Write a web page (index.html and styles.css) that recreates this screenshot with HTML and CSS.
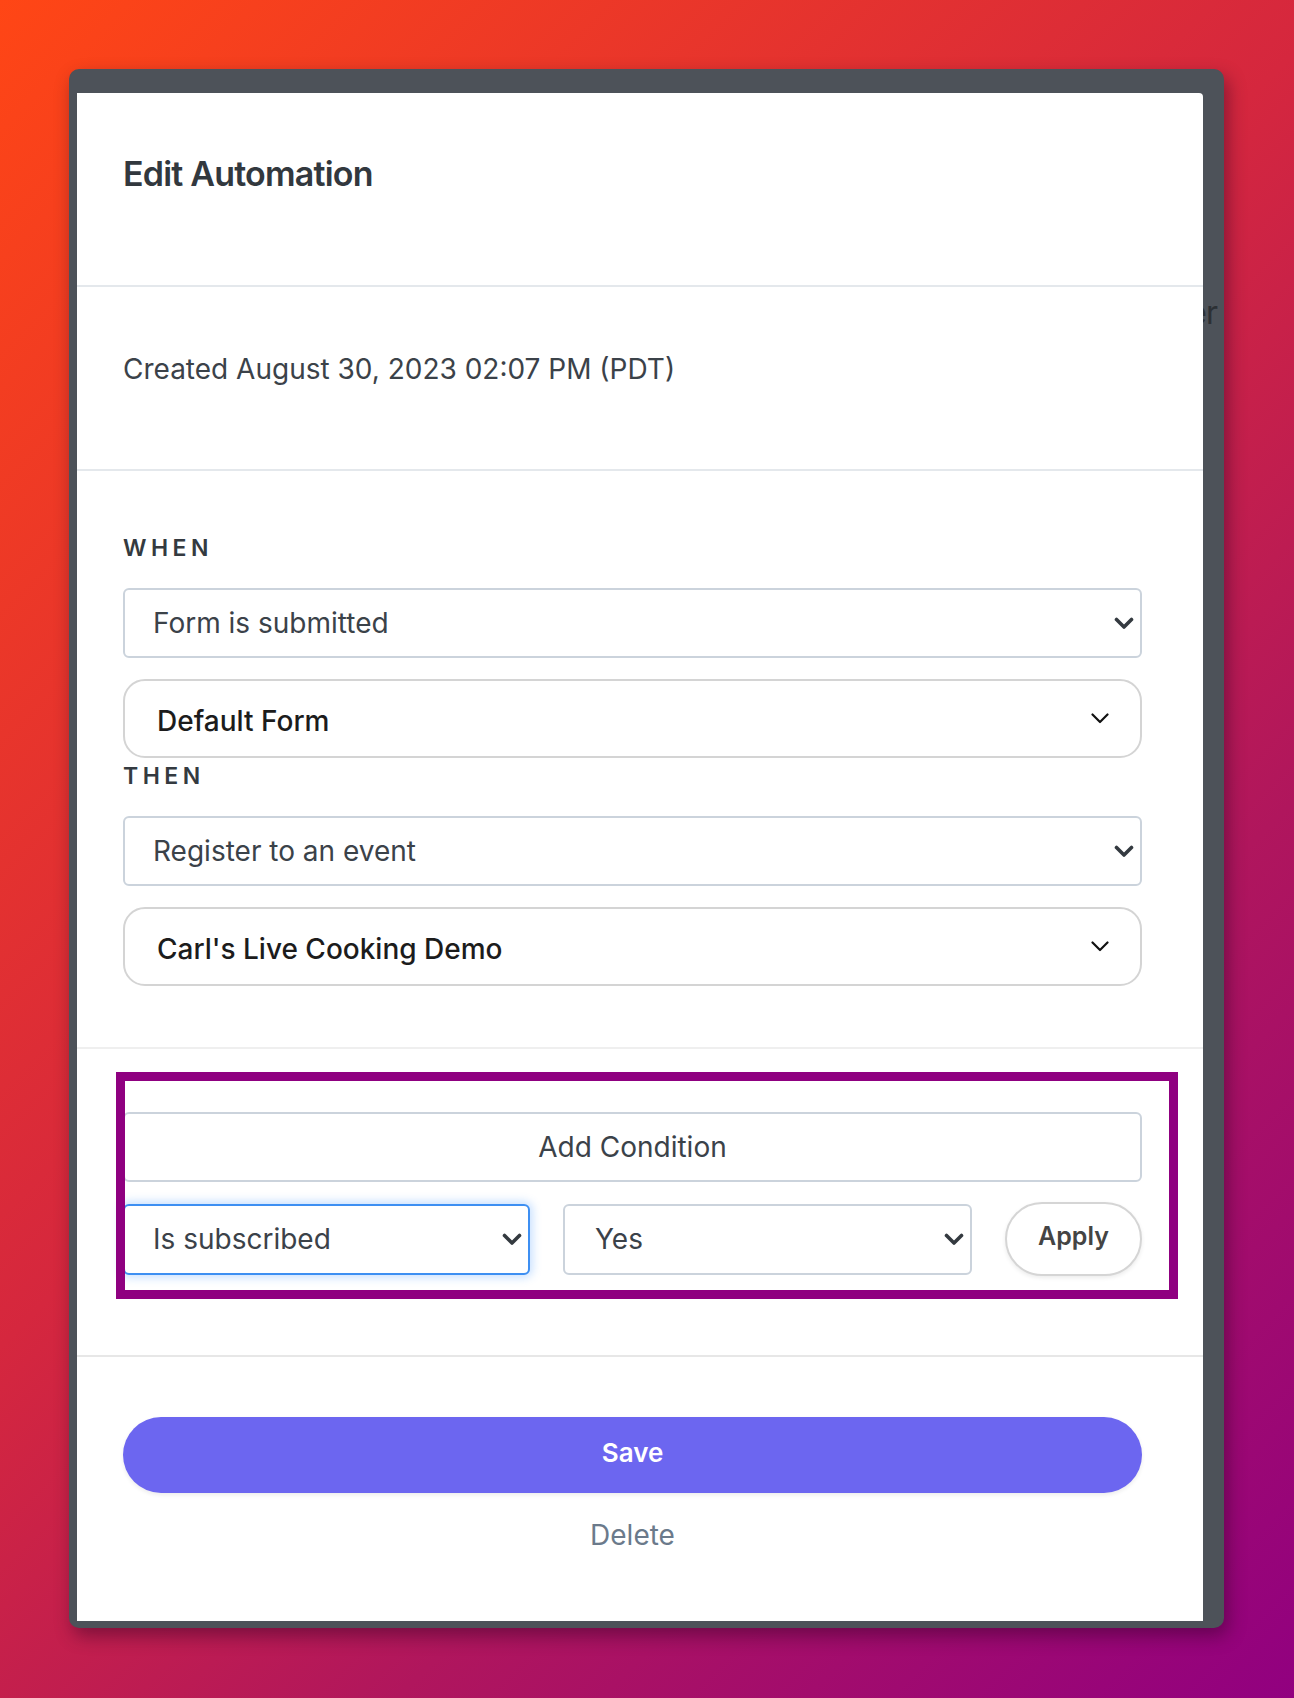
FILE: index.html
```html
<!DOCTYPE html>
<html lang="en">
<head>
<meta charset="utf-8">
<title>Edit Automation</title>
<link rel="stylesheet" href="styles.css">
</head>
<body>
<div class="stage">
  <div class="frame">
    <span class="peek">Register</span>
    <div class="panel">
      <header class="sec sec-head">
        <h1 class="title">Edit Automation</h1>
      </header>
      <section class="sec sec-meta">
        <p class="created">Created August 30, 2023 02:07 PM (PDT)</p>
      </section>
      <section class="sec sec-rules">
        <div class="label">WHEN</div>
        <div class="select sel-flat">
          <span class="sel-text">Form is submitted</span>
          <svg class="chev-bold" width="20" height="14" viewBox="0 0 20 14"><path d="M2.5 3.5 10 11 17.5 3.5" fill="none" stroke="#343a40" stroke-width="3.6" stroke-linecap="round" stroke-linejoin="round"/></svg>
        </div>
        <div class="select sel-round">
          <span class="sel-text">Default Form</span>
          <svg class="chev-thin" width="18" height="11" viewBox="0 0 18 11"><path d="M1.5 1.5 9 9 16.5 1.5" fill="none" stroke="#111" stroke-width="2.2" stroke-linecap="round" stroke-linejoin="round"/></svg>
        </div>
        <div class="label label-then">THEN</div>
        <div class="select sel-flat">
          <span class="sel-text">Register to an event</span>
          <svg class="chev-bold" width="20" height="14" viewBox="0 0 20 14"><path d="M2.5 3.5 10 11 17.5 3.5" fill="none" stroke="#343a40" stroke-width="3.6" stroke-linecap="round" stroke-linejoin="round"/></svg>
        </div>
        <div class="select sel-round">
          <span class="sel-text">Carl's Live Cooking Demo</span>
          <svg class="chev-thin" width="18" height="11" viewBox="0 0 18 11"><path d="M1.5 1.5 9 9 16.5 1.5" fill="none" stroke="#111" stroke-width="2.2" stroke-linecap="round" stroke-linejoin="round"/></svg>
        </div>
      </section>
      <section class="sec sec-cond">
        <div class="btn-outline">Add Condition</div>
        <div class="cond-row">
          <div class="select sel-flat sel-focus">
            <span class="sel-text">Is subscribed</span>
            <svg class="chev-bold" width="20" height="14" viewBox="0 0 20 14"><path d="M2.5 3.5 10 11 17.5 3.5" fill="none" stroke="#343a40" stroke-width="3.6" stroke-linecap="round" stroke-linejoin="round"/></svg>
          </div>
          <div class="select sel-flat">
            <span class="sel-text sel-yes">Yes</span>
            <svg class="chev-bold" width="20" height="14" viewBox="0 0 20 14"><path d="M2.5 3.5 10 11 17.5 3.5" fill="none" stroke="#343a40" stroke-width="3.6" stroke-linecap="round" stroke-linejoin="round"/></svg>
          </div>
          <button class="btn-apply" type="button">Apply</button>
        </div>
        <div class="highlight"></div>
      </section>
      <footer class="sec sec-actions">
        <button class="btn-save" type="button">Save</button>
        <button class="btn-delete" type="button">Delete</button>
      </footer>
    </div>
  </div>
</div>
</body>
</html>
```

FILE: styles.css
```css
html, body {
  margin: 0;
  padding: 0;
}

body {
  font-family: Inter, "Noto Sans", "Liberation Sans", sans-serif;
}

.stage {
  width: 1294px;
  height: 1698px;
  box-sizing: border-box;
  padding: 69px 0 0 69px;
  background: linear-gradient(135deg, #ff4615 0%, #d5273e 45%, #b0165d 70%, #910080 100%);
  overflow: hidden;
}

.frame {
  position: relative;
  width: 1155px;
  height: 1559px;
  box-sizing: border-box;
  padding: 24px 21px 7px 8px;
  background: #4d5259;
  border-radius: 10px;
  box-shadow: 4px 8px 18px rgba(45, 0, 35, 0.45);
}

.peek {
  position: absolute;
  right: 7px;
  top: 226px;
  font-size: 32px;
  line-height: 36px;
  letter-spacing: -1px;
  color: #2c3035;
  z-index: 0;
}

.panel {
  position: relative;
  z-index: 1;
  height: 100%;
  background: #fff;
  border-top-right-radius: 4px;
  display: flex;
  flex-direction: column;
}

.sec {
  padding-left: 46px;
  padding-right: 61px;
}

.sec-head {
  padding-top: 61px;
  padding-bottom: 91px;
  border-bottom: 2px solid #e4e8ec;
}

.title {
  margin: 0;
  font-size: 34px;
  line-height: 40px;
  font-weight: 600;
  letter-spacing: -0.8px;
  color: #32383e;
}

.sec-meta {
  padding-top: 66px;
  padding-bottom: 84px;
  border-bottom: 2px solid #e4e8ec;
}

.created {
  margin: 0;
  font-size: 28px;
  line-height: 32px;
  color: #3b4249;
}

.sec-rules {
  padding-top: 63px;
  padding-bottom: 61px;
  border-bottom: 2px solid #efefef;
  display: flex;
  flex-direction: column;
}

.label {
  font-size: 23px;
  line-height: 28px;
  font-weight: 600;
  letter-spacing: 4.5px;
  color: #343a40;
  margin-bottom: 26px;
}

.label-then {
  margin-top: 4px;
}

.select {
  box-sizing: border-box;
  display: flex;
  align-items: center;
  justify-content: space-between;
  background: #fff;
  font-size: 28px;
  line-height: 32px;
}

.sel-flat {
  height: 70px;
  border: 2px solid #cbd3dc;
  border-radius: 6px;
  padding: 0 6px 0 28px;
  color: #3b4249;
}

.sel-round {
  height: 79px;
  border: 2px solid #d4d4d4;
  border-radius: 22px;
  padding: 4px 31px 0 32px;
  font-weight: 450;
  color: #1c1c1c;
  margin-top: 21px;
}

.sel-round .chev-thin {
  margin-top: -4px;
}

.sel-round + .label-then {
  margin-top: 4px;
}

.sel-text {
  white-space: nowrap;
}

.sel-yes {
  padding-left: 2px;
}

.sel-focus {
  border-color: #3d8ff2;
  box-shadow: 0 0 9px 3px rgba(70, 150, 255, 0.28);
}

.sec-cond {
  position: relative;
  padding-top: 63px;
  padding-bottom: 79px;
  border-bottom: 2px solid #e7e7e7;
}

.btn-outline {
  box-sizing: border-box;
  height: 70px;
  border: 2px solid #cbd3dc;
  border-radius: 6px;
  display: flex;
  align-items: center;
  justify-content: center;
  font-size: 28px;
  line-height: 32px;
  color: #3b4249;
}

.cond-row {
  margin-top: 20px;
  display: grid;
  grid-template-columns: 407px 409px 137px;
  column-gap: 33px;
  align-items: center;
  height: 74px;
}

.cond-row .sel-flat {
  height: 71px;
}

.btn-apply {
  box-sizing: border-box;
  height: 74px;
  border: 2px solid #d5d5d5;
  border-radius: 37px;
  background: #fff;
  box-shadow: 0 2px 4px rgba(0, 0, 0, 0.08);
  font-family: inherit;
  font-size: 25px;
  font-weight: 600;
  color: #444;
  padding: 0 0 6px 0;
  cursor: pointer;
}

.highlight {
  position: absolute;
  left: 39px;
  top: 23px;
  width: 1062px;
  height: 227px;
  box-sizing: border-box;
  border: 9px solid #8f0080;
  pointer-events: none;
}

.sec-actions {
  padding-top: 60px;
  display: flex;
  flex-direction: column;
  align-items: stretch;
}

.btn-save {
  height: 76px;
  border: none;
  border-radius: 38px;
  background: #6c66f0;
  color: #fff;
  font-family: inherit;
  font-size: 26px;
  font-weight: 600;
  padding: 0 0 6px 0;
  box-shadow: 0 2px 4px rgba(0, 0, 0, 0.08);
  cursor: pointer;
}

.btn-delete {
  margin-top: 26px;
  border: none;
  background: none;
  padding: 0;
  font-family: inherit;
  font-size: 28px;
  line-height: 32px;
  color: #6b7a8b;
  cursor: pointer;
}
```
